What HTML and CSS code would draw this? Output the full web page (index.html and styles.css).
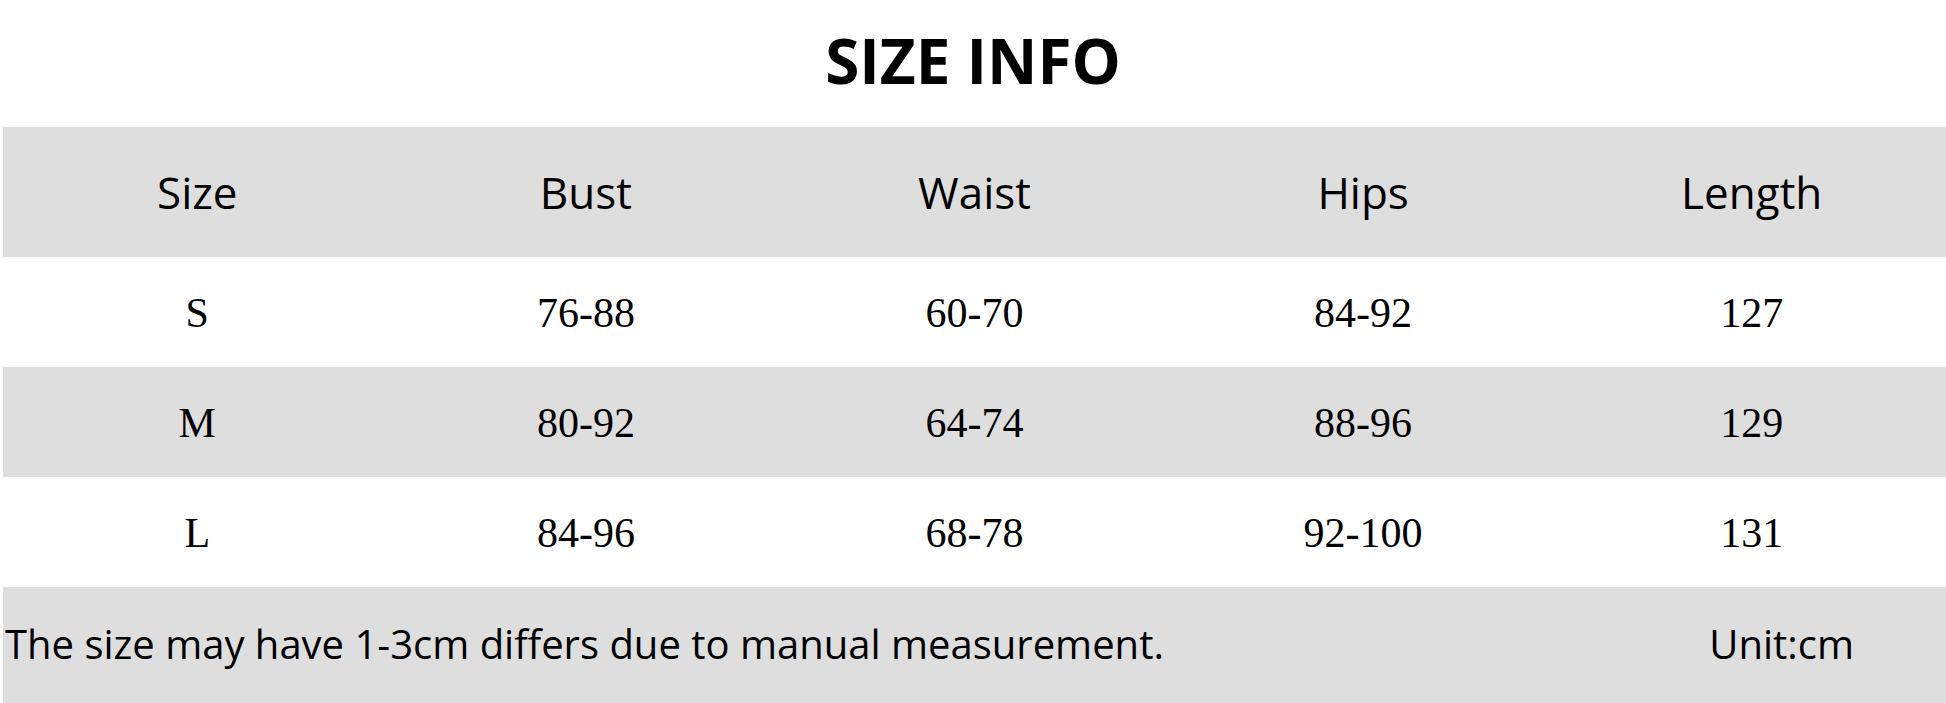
FILE: index.html
```html
<!DOCTYPE html>
<html lang="en">
<head>
<meta charset="utf-8">
<title>Size Info</title>
<link rel="stylesheet" href="styles.css">
</head>
<body>
<h1 class="title">SIZE INFO</h1>
<div class="chart">
  <div class="row head">
    <div class="cell">Size</div>
    <div class="cell">Bust</div>
    <div class="cell">Waist</div>
    <div class="cell">Hips</div>
    <div class="cell">Length</div>
  </div>
  <div class="row data">
    <div class="cell">S</div>
    <div class="cell">76-88</div>
    <div class="cell">60-70</div>
    <div class="cell">84-92</div>
    <div class="cell">127</div>
  </div>
  <div class="row data alt">
    <div class="cell">M</div>
    <div class="cell">80-92</div>
    <div class="cell">64-74</div>
    <div class="cell">88-96</div>
    <div class="cell">129</div>
  </div>
  <div class="row data">
    <div class="cell">L</div>
    <div class="cell">84-96</div>
    <div class="cell">68-78</div>
    <div class="cell">92-100</div>
    <div class="cell">131</div>
  </div>
  <div class="foot">
    <span class="note">The size may have 1-3cm differs due to manual measurement.</span>
    <span class="unit">Unit:cm</span>
  </div>
</div>
</body>
</html>
```

FILE: styles.css
```css
html, body {
  margin: 0;
  padding: 0;
  background: #ffffff;
}

body {
  width: 1946px;
  height: 703px;
  overflow: hidden;
  color: #000000;
  font-family: "Open Sans", "Noto Sans", sans-serif;
}

.title {
  margin: 0;
  height: 127px;
  box-sizing: border-box;
  padding-bottom: 6px;
  line-height: 121px;
  text-align: center;
  font-size: 62px;
  font-weight: 700;
}

.chart {
  margin-left: 3px;
}

.row {
  display: grid;
  grid-template-columns: repeat(5, 1fr);
  align-items: center;
  text-align: center;
}

.head {
  height: 130px;
  background: #dedede;
  font-family: "Open Sans", "Noto Sans", sans-serif;
  font-size: 44px;
  line-height: 130px;
}

.data {
  height: 110px;
  box-sizing: border-box;
  padding-top: 2px;
  background: #ffffff;
  font-family: "Liberation Serif", "Times New Roman", serif;
  font-size: 42px;
  line-height: 60px;
}

.data.alt {
  background: #dedede;
}

.foot {
  height: 116px;
  background: #dedede;
  display: flex;
  align-items: center;
  justify-content: space-between;
  padding: 0 92px 4px 2px;
  box-sizing: border-box;
  font-family: "Open Sans", "Noto Sans", sans-serif;
  font-size: 40px;
}
```
